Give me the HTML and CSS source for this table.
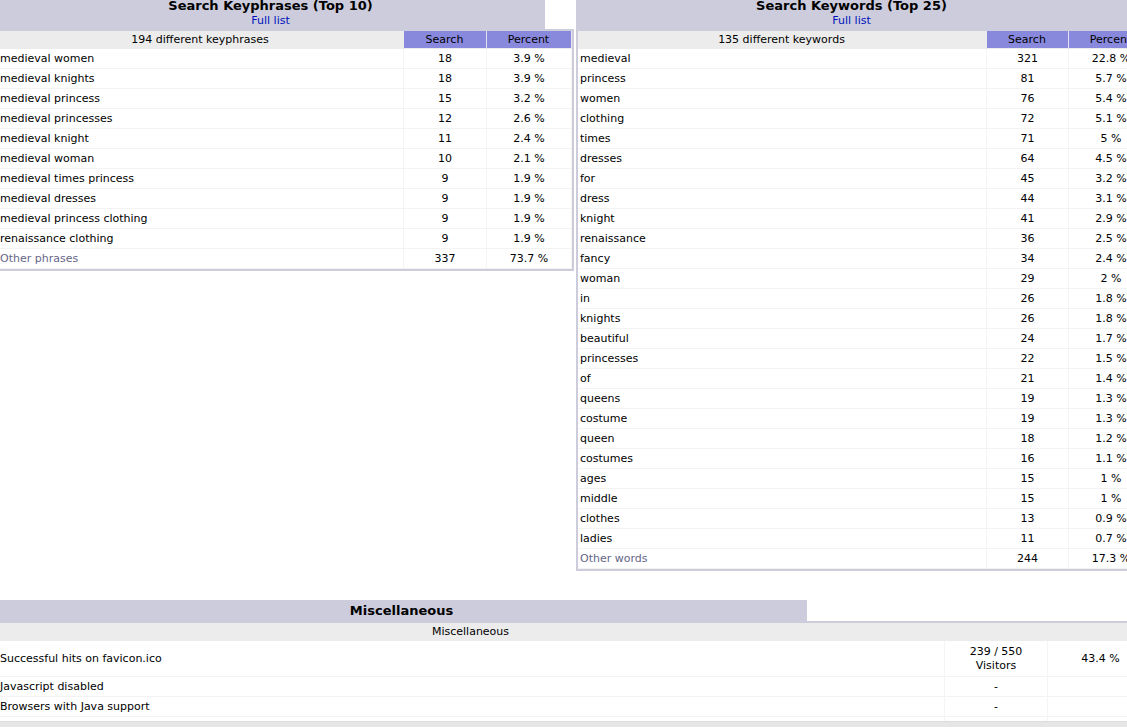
FILE: index.html
```html
<!DOCTYPE html>
<html>
<head>
<meta charset="utf-8">
<title>Statistics - Search</title>
<link rel="stylesheet" href="styles.css">
</head>
<body>
<div class="page">
  <div class="pair">
    <section class="box box-left">
      <div class="box-head">
        <div class="title title-left"><span class="title-text">Search Keyphrases (Top 10)</span><a class="full" href="#">Full list</a></div>
        <div class="blank"></div>
      </div>
      <div class="frame">
        <table class="data">
          <colgroup><col><col class="c-num"><col class="c-pct"></colgroup>
          <tr><th>194 different keyphrases</th><th class="th-s">Search</th><th class="th-s">Percent</th></tr>
          <tr><td class="name">medieval women</td><td>18</td><td>3.9 %</td></tr>
          <tr><td class="name">medieval knights</td><td>18</td><td>3.9 %</td></tr>
          <tr><td class="name">medieval princess</td><td>15</td><td>3.2 %</td></tr>
          <tr><td class="name">medieval princesses</td><td>12</td><td>2.6 %</td></tr>
          <tr><td class="name">medieval knight</td><td>11</td><td>2.4 %</td></tr>
          <tr><td class="name">medieval woman</td><td>10</td><td>2.1 %</td></tr>
          <tr><td class="name">medieval times princess</td><td>9</td><td>1.9 %</td></tr>
          <tr><td class="name">medieval dresses</td><td>9</td><td>1.9 %</td></tr>
          <tr><td class="name">medieval princess clothing</td><td>9</td><td>1.9 %</td></tr>
          <tr><td class="name">renaissance clothing</td><td>9</td><td>1.9 %</td></tr>
          <tr><td class="name other">Other phrases</td><td>337</td><td>73.7 %</td></tr>
        </table>
      </div>
    </section>
    <section class="box box-right">
      <div class="box-head">
        <div class="title title-right"><span class="title-text">Search Keywords (Top 25)</span><a class="full" href="#">Full list</a></div>
        <div class="blank"></div>
      </div>
      <div class="frame">
        <table class="data">
          <colgroup><col><col class="c-num2"><col class="c-pct"></colgroup>
          <tr><th>135 different keywords</th><th class="th-s">Search</th><th class="th-s">Percent</th></tr>
          <tr><td class="name">medieval</td><td>321</td><td>22.8 %</td></tr>
          <tr><td class="name">princess</td><td>81</td><td>5.7 %</td></tr>
          <tr><td class="name">women</td><td>76</td><td>5.4 %</td></tr>
          <tr><td class="name">clothing</td><td>72</td><td>5.1 %</td></tr>
          <tr><td class="name">times</td><td>71</td><td>5 %</td></tr>
          <tr><td class="name">dresses</td><td>64</td><td>4.5 %</td></tr>
          <tr><td class="name">for</td><td>45</td><td>3.2 %</td></tr>
          <tr><td class="name">dress</td><td>44</td><td>3.1 %</td></tr>
          <tr><td class="name">knight</td><td>41</td><td>2.9 %</td></tr>
          <tr><td class="name">renaissance</td><td>36</td><td>2.5 %</td></tr>
          <tr><td class="name">fancy</td><td>34</td><td>2.4 %</td></tr>
          <tr><td class="name">woman</td><td>29</td><td>2 %</td></tr>
          <tr><td class="name">in</td><td>26</td><td>1.8 %</td></tr>
          <tr><td class="name">knights</td><td>26</td><td>1.8 %</td></tr>
          <tr><td class="name">beautiful</td><td>24</td><td>1.7 %</td></tr>
          <tr><td class="name">princesses</td><td>22</td><td>1.5 %</td></tr>
          <tr><td class="name">of</td><td>21</td><td>1.4 %</td></tr>
          <tr><td class="name">queens</td><td>19</td><td>1.3 %</td></tr>
          <tr><td class="name">costume</td><td>19</td><td>1.3 %</td></tr>
          <tr><td class="name">queen</td><td>18</td><td>1.2 %</td></tr>
          <tr><td class="name">costumes</td><td>16</td><td>1.1 %</td></tr>
          <tr><td class="name">ages</td><td>15</td><td>1 %</td></tr>
          <tr><td class="name">middle</td><td>15</td><td>1 %</td></tr>
          <tr><td class="name">clothes</td><td>13</td><td>0.9 %</td></tr>
          <tr><td class="name">ladies</td><td>11</td><td>0.7 %</td></tr>
          <tr><td class="name other">Other words</td><td>244</td><td>17.3 %</td></tr>
        </table>
      </div>
    </section>
  </div>

  <section class="box box-misc">
    <div class="box-head">
      <div class="title title-misc"><span class="title-text">Miscellaneous</span></div>
      <div class="blank"></div>
    </div>
    <div class="frame">
      <table class="data">
        <colgroup><col><col class="c-m2"><col class="c-m3"></colgroup>
        <tr><th>Miscellaneous</th><th>&nbsp;</th><th>&nbsp;</th></tr>
        <tr class="tall"><td class="name">Successful hits on favicon.ico</td><td>239 / 550<br>Visitors</td><td>43.4 %</td></tr>
        <tr><td class="name">Javascript disabled</td><td>-</td><td>&nbsp;</td></tr>
        <tr><td class="name">Browsers with Java support</td><td>-</td><td>&nbsp;</td></tr>
        <tr><td class="name">Browsers with Macromedia Director Support</td><td>-</td><td>&nbsp;</td></tr>
        <tr><td class="name">Browsers with Flash Support</td><td>-</td><td>&nbsp;</td></tr>
      </table>
    </div>
  </section>
</div>
<div class="hbar"></div>
</body>
</html>
```

FILE: styles.css
```css
html, body {
  margin: 0;
  padding: 0;
  overflow: hidden;
  background: #ffffff;
}

body {
  font-family: "DejaVu Sans", Verdana, "Liberation Sans", sans-serif;
  font-size: 11px;
  color: #000000;
}

.page {
  margin-left: -4px;
  margin-top: -4px;
  width: 1160px;
}

.pair {
  display: flex;
  gap: 2px;
  align-items: flex-start;
}

.box-left { width: 578px; }
.box-right { width: 580px; }
.box-misc { width: 1160px; margin-top: 29px; }

.box-head {
  display: flex;
}

.title {
  background: #CCCCDD;
  text-align: center;
  padding: 2px 1px 2px;
  display: flex;
  flex-direction: column;
  align-items: center;
}

.title-left { width: 547px; }
.title-right { width: 549px; }
.title-misc { width: 809px; padding: 3px 1px 2px; }

.title-text {
  font-size: 13px;
  font-weight: bold;
  line-height: 16px;
}

.full {
  font-size: 11px;
  line-height: 13px;
  color: #0011BB;
  text-decoration: none;
}

.blank {
  flex: 1;
  background: #ffffff;
}

.frame {
  background: #CCCCDD;
  padding: 2px;
}

.data {
  width: 100%;
  border-collapse: separate;
  border-spacing: 0;
  table-layout: fixed;
  background: #ffffff;
}

.c-num { width: 83px; }
.c-num2 { width: 82px; }
.c-pct { width: 85px; }
.c-m2 { width: 103px; }
.c-m3 { width: 106px; }

.data th {
  background: #ECECEC;
  font-weight: normal;
  font-size: 11px;
  line-height: 13px;
  padding: 2px 2px 2px 1px;
  text-align: center;
  border-right: 1px solid #ECECEC;
  border-bottom: 1px solid #ECECEC;
  white-space: nowrap;
}

.data th.th-s {
  background: #8888DD;
  border-right: 1px solid #E4E4F0;
}

.data td {
  font-size: 11px;
  line-height: 14px;
  padding: 3px 2px 2px;
  text-align: center;
  border-right: 1px solid #F4F4F4;
  border-bottom: 1px solid #F3F3F3;
  white-space: nowrap;
  overflow: hidden;
}

.data td.name {
  text-align: left;
}

.data tr.tall td {
  padding: 4px 2px 3px;
}

.other {
  color: #666688;
}

.hbar {
  position: fixed;
  left: 0;
  right: 0;
  bottom: 0;
  height: 5px;
  background: #E6E6E6;
  border-top: 1px solid #DCDCDC;
}
```
